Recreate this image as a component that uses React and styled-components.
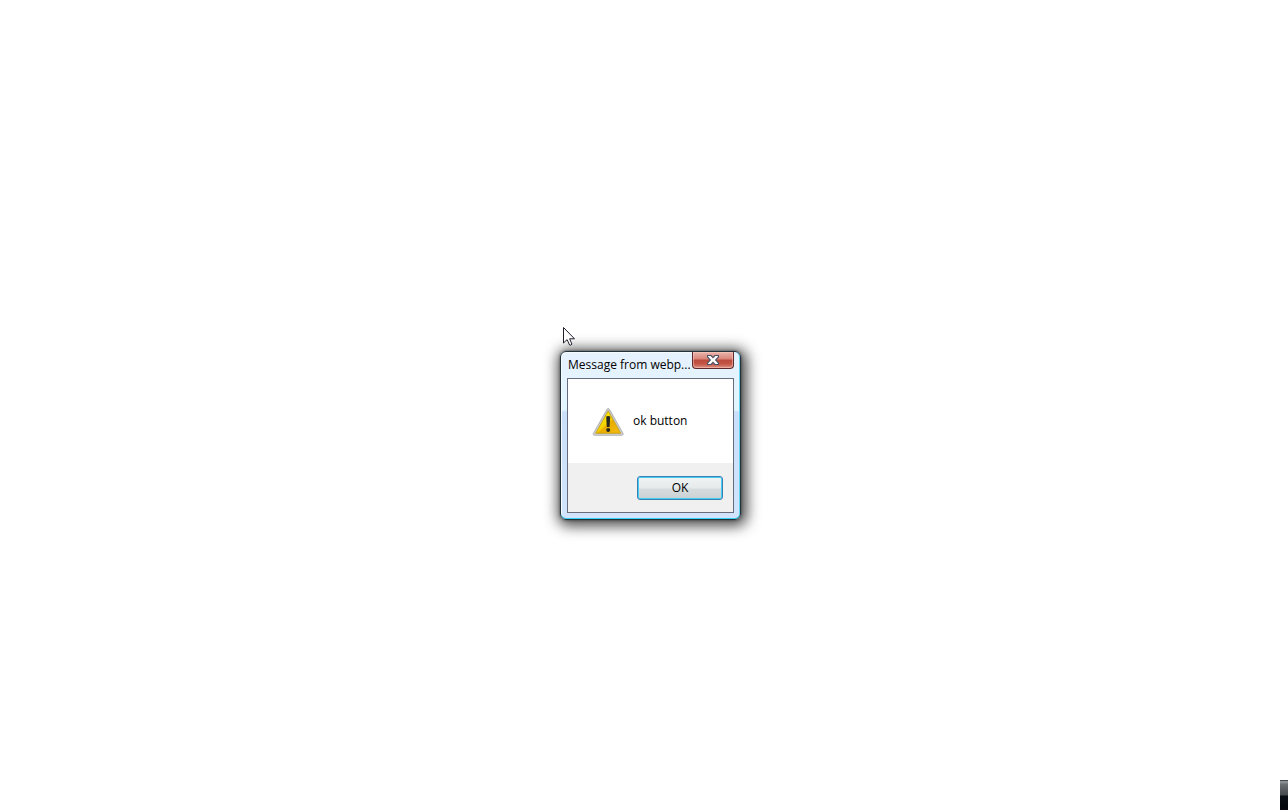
import React from "react";
import styled, { createGlobalStyle } from "styled-components";

const GlobalStyle = createGlobalStyle`
  * { box-sizing: border-box; }
  body {
    margin: 0;
    background: #fff;
    color: #000;
    font-family: "Segoe UI", "Open Sans", sans-serif;
    font-size: 12px;
    line-height: 16px;
  }
`;

const Desktop = styled.main`
  position: relative;
  min-height: 100vh;
  overflow: hidden;
`;

const Window = styled.section`
  position: absolute;
  left: calc(50% - 84px);
  top: calc(50% - 54px);
  width: 181px;
  padding: 0 6px 6px;
  border: 1px solid #24323c;
  border-radius: 6px;
  background:
    linear-gradient(to bottom, #e6f1fe 0, #e2f6ff 58px, #c9dffa 60px, #d2e4fd 100%);
  box-shadow:
    inset 0 -1px 0 #35d0f5,
    inset -1px 0 0 #62d8ee,
    inset 1px 1px 0 #f5fbff,
    0 0 3px rgba(0, 0, 0, 0.5),
    2px 2px 14px 4px rgba(0, 0, 0, 0.7);
`;

const TitleBar = styled.header`
  display: flex;
  justify-content: space-between;
  align-items: flex-start;
  height: 26px;
`;

const Title = styled.h1`
  margin: 0;
  padding: 5px 0 0 1px;
  min-width: 0;
  font-size: 12px;
  font-weight: 400;
  white-space: nowrap;
`;

const CloseButton = styled.button`
  display: flex;
  flex: none;
  justify-content: center;
  align-items: center;
  width: 42px;
  height: 17px;
  padding: 0;
  border: 1px solid #5c2a2c;
  border-top: 0;
  border-radius: 0 0 4px 4px;
  background: linear-gradient(to bottom, #e8b5ac 0, #d98579 7px, #bb4a3b 8px, #c45645 12px, #dd9486 100%);
  box-shadow: inset 0 0 0 1px rgba(255, 205, 195, 0.5);
`;

const Client = styled.div`
  border: 1px solid #666c7c;
  background: #fff;
`;

const Message = styled.div`
  display: flex;
  align-items: center;
  gap: 9px;
  height: 84px;
  padding-left: 24px;
`;

const Text = styled.p`
  margin: 0;
`;

const Actions = styled.footer`
  display: flex;
  justify-content: flex-end;
  padding: 13px 10px 12px;
  background: #f0f0f0;
`;

const OkButton = styled.button`
  width: 86px;
  height: 24px;
  padding: 0;
  border: 1px solid #3c7fb1;
  border-radius: 3px;
  background: linear-gradient(to bottom, #f0f3f4 0, #e6eaeb 11px, #d6dcdd 12px, #cbd2d4 100%);
  box-shadow: inset 0 0 0 1px #43cdf2;
  color: #000;
  font: inherit;
`;

const Pointer = styled.svg`
  position: absolute;
  left: calc(50% - 82px);
  top: calc(50% - 79px);
`;

const TrayEdge = styled.div`
  position: absolute;
  right: 0;
  bottom: 0;
  width: 8px;
  height: 30px;
  border-top: 1px solid #42474b;
  background: linear-gradient(to bottom, #929598 0, #85898c 2px, #6c7073 3px, #454a4f 14px, #080e14 15px, #03070c 27px, #0b0710 100%);
`;

function CloseIcon() {
  return (
    <svg width="12" height="10" viewBox="0 0 12 10" aria-hidden="true">
      <path
        d="M.5.5H4L6 2.600 8 .5h3.500V2L8.700 5l2.800 3v1.500H8L6 7.400 4 9.500H.5V8L3.300 5 .5 2Z"
        fill="#fff"
        stroke="#4d5064"
        strokeWidth="1.200"
      />
    </svg>
  );
}

function WarningIcon() {
  return (
    <svg width="32" height="32" viewBox="0 0 32 32" aria-hidden="true">
      <defs>
        <linearGradient id="rim" x1="0" y1="0" x2="0" y2="1">
          <stop offset="0" stopColor="#c4c4c6" />
          <stop offset="1" stopColor="#d2d2d4" />
        </linearGradient>
        <linearGradient id="sign" x1="0" y1="0" x2="1" y2="1">
          <stop offset="0.2" stopColor="#fff000" />
          <stop offset="0.5" stopColor="#f3d200" />
          <stop offset="0.55" stopColor="#e9ad00" />
          <stop offset="1" stopColor="#f3bc12" />
        </linearGradient>
      </defs>
      <path d="M16.200 3.500q.8 0 1.400 1.100l13.500 23.800q.6 1.700-1.200 1.900H2.500q-1.800-.2-1.200-1.900L14.800 4.600q.6-1.100 1.400-1.100Z" fill="url(#rim)" stroke="#a09f9f" strokeWidth=".7" />
      <path d="M16.200 6 28.800 28.300H3.600Z" fill="url(#sign)" stroke="#c39a0c" strokeWidth=".8" strokeLinejoin="round" />
      <path d="M14.200 11.500q2-1 4 0l-.6 10.500h-2.800Z" fill="#252720" />
      <circle cx="16.200" cy="25" r="2" fill="#252720" />
    </svg>
  );
}

export default function App() {
  return (
    <>
      <GlobalStyle />
      <Desktop>
        <Window role="alertdialog" aria-labelledby="dialog-title" aria-describedby="dialog-text">
          <TitleBar>
            <Title id="dialog-title">Message from webp...</Title>
            <CloseButton type="button" aria-label="Close">
              <CloseIcon />
            </CloseButton>
          </TitleBar>
          <Client>
            <Message>
              <WarningIcon />
              <Text id="dialog-text">ok button</Text>
            </Message>
            <Actions>
              <OkButton type="button">OK</OkButton>
            </Actions>
          </Client>
        </Window>
        <Pointer width="14" height="21" viewBox="0 0 14 21" aria-hidden="true">
          <path
            d="M1.500 1.500v15.500l3.600-3.400 2.500 5.400q1.500.7 2.300-.9L7.600 12.800h4.900Z"
            fill="#fff"
            stroke="#1d1d2b"
          />
        </Pointer>
        <TrayEdge />
      </Desktop>
    </>
  );
}
